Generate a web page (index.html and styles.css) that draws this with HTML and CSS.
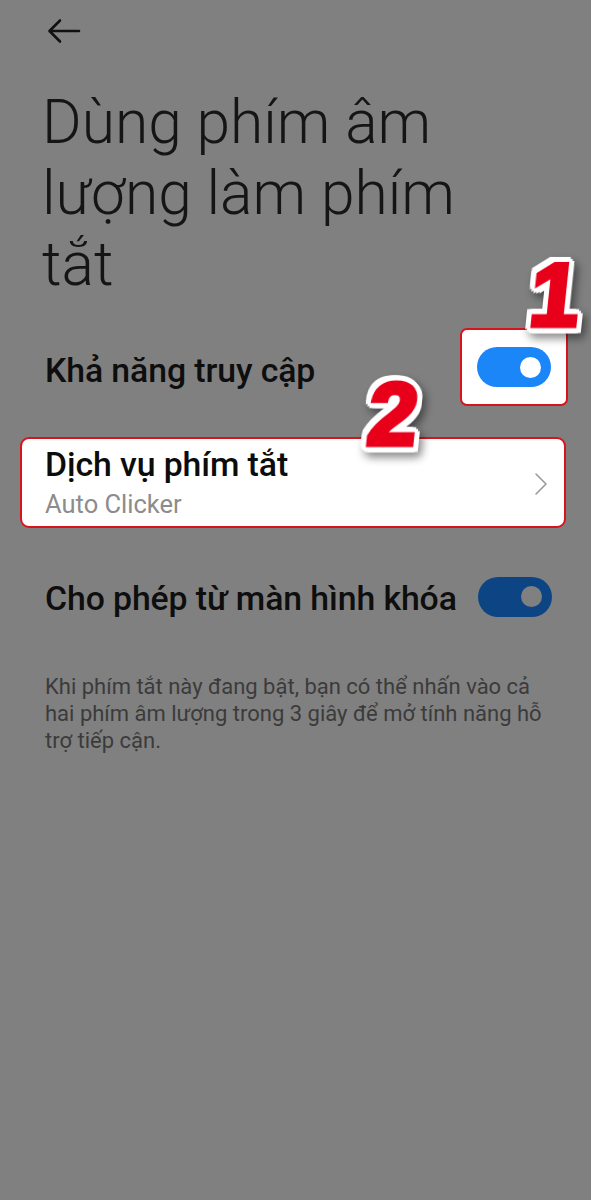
FILE: index.html
```html
<!DOCTYPE html>
<html lang="vi">
<head>
<meta charset="utf-8">
<title>Dùng phím âm lượng làm phím tắt</title>
<link rel="stylesheet" href="styles.css">
</head>
<body>
<div class="screen">
  <header class="topbar">
    <svg class="back" width="34" height="26" viewBox="0 0 34 26" aria-hidden="true">
      <path d="M32 13H3M13 2.5L2.5 13L13 23.5" fill="none" stroke="#111" stroke-width="2.6" stroke-linecap="round" stroke-linejoin="round"/>
    </svg>
  </header>

  <h1 class="title">Dùng phím âm lượng làm phím tắt</h1>

  <div class="row row-first">
    <span class="row-label">Khả năng truy cập</span>
    <div class="toggle-frame">
      <span class="toggle toggle-bright"><span class="knob knob-white"></span></span>
    </div>
  </div>

  <div class="card">
    <div class="card-text">
      <div class="card-title">Dịch vụ phím tắt</div>
      <div class="card-sub">Auto Clicker</div>
    </div>
    <svg class="chev" width="14" height="24" viewBox="0 0 14 24" aria-hidden="true">
      <path d="M2 2L12 12L2 22" fill="none" stroke="#9a9a9a" stroke-width="1.6" stroke-linecap="round" stroke-linejoin="round"/>
    </svg>
  </div>

  <div class="row row-lock">
    <span class="row-label">Cho phép từ màn hình khóa</span>
    <span class="toggle toggle-dim"><span class="knob knob-gray"></span></span>
  </div>

  <p class="desc">Khi phím tắt này đang bật, bạn có thể nhấn vào cả<br>hai phím âm lượng trong 3 giây để mở tính năng hỗ<br>trợ tiếp cận.</p>

  <span class="badge badge-1">1</span>
  <span class="badge badge-2">2</span>
</div>
</body>
</html>
```

FILE: styles.css
```css
html, body {
  margin: 0;
  padding: 0;
  background: #808080;
}

.screen {
  position: relative;
  width: 591px;
  min-height: 1200px;
  background: #808080;
  font-family: Roboto, "Noto Sans", "Liberation Sans", sans-serif;
  color: #121212;
  overflow: hidden;
}

.topbar {
  height: 60px;
  padding-left: 47px;
  display: flex;
  align-items: flex-start;
  box-sizing: border-box;
  padding-top: 18px;
}

.back {
  display: block;
}

.title {
  margin: 27px 0 0 0;
  padding: 0 100px 0 42px;
  font-weight: 300;
  font-size: 60.5px;
  line-height: 71px;
  color: #151515;
  letter-spacing: 0;
}

.row {
  display: flex;
  align-items: center;
  justify-content: space-between;
  padding-left: 45px;
}

.row-first {
  margin-top: 28px;
  padding-right: 23px;
}

.row-label {
  font-size: 33.8px;
  font-weight: 500;
  color: #0e0e0e;
  padding-top: 7px;
  letter-spacing: -0.1px;
}

.toggle-frame {
  background: #ffffff;
  border: 2px solid #d7141d;
  border-radius: 7px;
  padding: 17px 15px;
  display: flex;
}

.toggle {
  width: 74px;
  height: 40px;
  border-radius: 20px;
  display: flex;
  align-items: center;
  justify-content: flex-end;
  padding-right: 10px;
  box-sizing: border-box;
}

.toggle-bright {
  background: #1a86f7;
}

.toggle-dim {
  background: #0d4584;
}

.knob {
  width: 21px;
  height: 21px;
  border-radius: 50%;
}

.knob-white {
  background: #ffffff;
}

.knob-gray {
  background: #808080;
}

.card {
  margin: 31px 25px 0 20px;
  height: 91px;
  box-sizing: border-box;
  background: #ffffff;
  border: 2px solid #d7141d;
  border-radius: 9px;
  display: flex;
  align-items: center;
  justify-content: space-between;
  padding: 0 16px 0 23px;
}

.card-title {
  font-size: 33.8px;
  font-weight: 500;
  color: #0c0c0c;
  line-height: 38px;
  letter-spacing: -0.1px;
}

.card-sub {
  font-size: 25.5px;
  color: #8c8c8c;
  line-height: 32px;
  margin-top: 4px;
}

.chev {
  display: block;
  margin-top: 2px;
}

.row-lock {
  margin-top: 47px;
  padding-right: 39px;
}

.row-lock .row-label {
  padding-top: 4px;
}

.desc {
  margin: 55px 10px 0 45px;
  font-size: 22px;
  line-height: 27px;
  color: #3b3b3b;
  white-space: nowrap;
}

.badge {
  position: absolute;
  font-family: "Liberation Sans", Arial, sans-serif;
  font-weight: 700;
  font-size: 88px;
  color: #e8001b;
  line-height: 1;
  -webkit-text-stroke: 5px #e8001b;
  transform: skewX(-6deg);
  transform-origin: left bottom;
  filter: drop-shadow(3px 0 0 #fff) drop-shadow(-3px 0 0 #fff) drop-shadow(0 3px 0 #fff) drop-shadow(0 -3px 0 #fff) drop-shadow(2px 2px 0 #fff) drop-shadow(-2px -2px 0 #fff) drop-shadow(4px 5px 4px rgba(0, 0, 0, 0.45));
}

.badge-1 {
  left: 526px;
  top: 252px;
}

.badge-2 {
  left: 364px;
  top: 371px;
}
```
